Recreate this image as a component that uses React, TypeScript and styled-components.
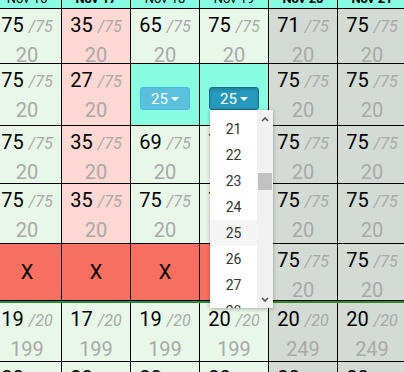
import React from 'react';
import styled, { createGlobalStyle, css } from 'styled-components';

const GlobalStyle = createGlobalStyle`
  html, body {
    margin: 0;
    padding: 0;
    background: #ffffff;
    font-family: 'Roboto', 'Liberation Sans', sans-serif;
    overflow: hidden;
  }
`;

type Tone = 'green' | 'pink' | 'gray' | 'cyan' | 'red';

type Cell =
  | { kind: 'count'; value: number; cap: number; sub: number; tone: Tone }
  | { kind: 'closed' }
  | { kind: 'pick'; value: number; open?: boolean };

const tones: Record<Tone, string> = {
  green: '#e9f7e9',
  pink: '#ffd7d3',
  gray: '#d3dbd4',
  cyan: '#88fde1',
  red: '#f76f61',
};

const days = [
  { label: 'Nov 16', bold: false },
  { label: 'Nov 17', bold: true },
  { label: 'Nov 18', bold: false },
  { label: 'Nov 19', bold: false },
  { label: 'Nov 20', bold: true },
  { label: 'Nov 21', bold: true },
];

const c = (value: number, cap: number, sub: number, tone: Tone): Cell => ({
  kind: 'count',
  value,
  cap,
  sub,
  tone,
});

const rows: { height: number; rule?: boolean; cells: Cell[] }[] = [
  {
    height: 54,
    cells: [c(75, 75, 20, 'green'), c(35, 75, 20, 'pink'), c(65, 75, 20, 'green'), c(75, 75, 20, 'green'), c(71, 75, 20, 'gray'), c(75, 75, 20, 'gray')],
  },
  {
    height: 61,
    cells: [c(75, 75, 20, 'green'), c(27, 75, 20, 'pink'), { kind: 'pick', value: 25 }, { kind: 'pick', value: 25, open: true }, c(75, 75, 20, 'gray'), c(75, 75, 20, 'gray')],
  },
  {
    height: 57,
    cells: [c(75, 75, 20, 'green'), c(35, 75, 20, 'pink'), c(69, 75, 20, 'green'), c(75, 75, 20, 'green'), c(75, 75, 20, 'gray'), c(75, 75, 20, 'gray')],
  },
  {
    height: 59,
    cells: [c(75, 75, 20, 'green'), c(35, 75, 20, 'pink'), c(75, 75, 20, 'green'), c(75, 75, 20, 'green'), c(75, 75, 20, 'gray'), c(75, 75, 20, 'gray')],
  },
  {
    height: 56,
    cells: [{ kind: 'closed' }, { kind: 'closed' }, { kind: 'closed' }, { kind: 'closed' }, c(75, 75, 20, 'gray'), c(75, 75, 20, 'gray')],
  },
  {
    height: 58,
    rule: true,
    cells: [c(19, 20, 199, 'green'), c(17, 20, 199, 'green'), c(19, 20, 199, 'green'), c(20, 20, 199, 'green'), c(20, 20, 249, 'gray'), c(20, 20, 249, 'gray')],
  },
  {
    height: 58,
    cells: [c(20, 20, 199, 'green'), c(20, 20, 199, 'green'), c(20, 20, 199, 'green'), c(20, 20, 199, 'green'), c(20, 20, 249, 'gray'), c(20, 20, 249, 'gray')],
  },
];

const options = [21, 22, 23, 24, 25, 26, 27, 28];

export default function App() {
  return (
    <>
      <GlobalStyle />
      <Viewport>
        <Table>
          <Row $height={8}>
            {days.map((d) => (
              <HeadCell key={d.label}>
                <HeadLabel $bold={d.bold}>{d.label}</HeadLabel>
              </HeadCell>
            ))}
          </Row>
          {rows.map((row, ri) => (
            <Row key={ri} $height={row.height} $rule={row.rule}>
              {row.cells.map((cell, ci) => renderCell(cell, ci))}
            </Row>
          ))}
        </Table>
      </Viewport>
    </>
  );
}

function renderCell(cell: Cell, key: number) {
  if (cell.kind === 'closed') {
    return (
      <DayCell key={key} $tone="red" $center>
        <Closed>X</Closed>
      </DayCell>
    );
  }
  if (cell.kind === 'pick') {
    return (
      <DayCell key={key} $tone="cyan">
        <Dropdown>
          <PickButton $active={cell.open}>
            {cell.value}
            <Caret />
          </PickButton>
          {cell.open && (
            <Menu>
              <MenuList>
                {options.map((o) => (
                  <MenuItem key={o} $selected={o === cell.value}>
                    {o}
                  </MenuItem>
                ))}
              </MenuList>
              <ScrollTrack>
                <Arrow viewBox="0 0 8 5">
                  <polyline points="1,4 4,1 7,4" />
                </Arrow>
                <Thumb />
                <Arrow viewBox="0 0 8 5" $bottom>
                  <polyline points="1,1 4,4 7,1" />
                </Arrow>
              </ScrollTrack>
            </Menu>
          )}
        </Dropdown>
      </DayCell>
    );
  }
  return (
    <DayCell key={key} $tone={cell.tone}>
      <Line>
        <Big>{cell.value}</Big>
        <Cap>/{cell.cap}</Cap>
      </Line>
      <Sub>{cell.sub}</Sub>
    </DayCell>
  );
}

const Viewport = styled.div`
  width: 404px;
  height: 372px;
  overflow: hidden;
`;

const Table = styled.div`
  display: grid;
  row-gap: 1px;
  width: 413px;
  margin-left: -7px;
  background: #000;
`;

const Row = styled.div<{ $height: number; $rule?: boolean }>`
  display: grid;
  grid-template-columns: repeat(6, 68px);
  grid-template-rows: minmax(0, 1fr);
  column-gap: 1px;
  height: ${(p) => p.$height}px;
  ${(p) =>
    p.$rule &&
    css`
      border-top: 2px solid #2b8a2b;
    `}
`;

const HeadCell = styled.div`
  background: #88fde1;
  display: flex;
  align-items: flex-end;
  justify-content: center;
  overflow: hidden;
  min-height: 0;
`;

const HeadLabel = styled.span<{ $bold: boolean }>`
  font-size: 13px;
  line-height: 14px;
  padding-bottom: 2px;
  color: #000;
  font-weight: ${(p) => (p.$bold ? 700 : 400)};
`;

const DayCell = styled.div<{ $tone: Tone; $center?: boolean }>`
  background: ${(p) => tones[p.$tone]};
  min-height: 0;
  box-sizing: border-box;
  padding-top: ${(p) => (p.$center ? 0 : 2)}px;
  display: flex;
  flex-direction: column;
  align-items: center;
  justify-content: ${(p) => (p.$center ? 'center' : 'flex-start')};
`;

const Line = styled.div`
  display: flex;
  align-items: baseline;
  gap: 5px;
  line-height: 28px;
`;

const Big = styled.span`
  font-size: 20px;
  color: #000;
`;

const Cap = styled.span`
  font-size: 16px;
  font-style: italic;
  color: #a9a9a9;
`;

const Sub = styled.div`
  font-size: 20px;
  line-height: 28px;
  color: #a9a9a9;
`;

const Closed = styled.span`
  font-size: 20px;
  color: #000;
`;

const Dropdown = styled.div`
  position: relative;
  margin-top: 21px;
`;

const PickButton = styled.div<{ $active?: boolean }>`
  width: 50px;
  height: 23px;
  box-sizing: border-box;
  border-radius: 3px;
  display: flex;
  align-items: center;
  justify-content: center;
  gap: 3px;
  color: #fff;
  font-size: 15px;
  background: ${(p) => (p.$active ? '#269abc' : '#5bc0de')};
  border: 1px solid ${(p) => (p.$active ? '#1b6d85' : '#46b8da')};
  box-shadow: ${(p) => (p.$active ? 'inset 0 2px 3px rgba(0,0,0,0.15)' : 'none')};
`;

const Caret = styled.span`
  width: 0;
  height: 0;
  border-left: 4px solid transparent;
  border-right: 4px solid transparent;
  border-top: 4px solid #fff;
`;

const Menu = styled.div`
  position: absolute;
  top: 100%;
  left: 1px;
  z-index: 10;
  width: 63px;
  height: 198px;
  background: #fff;
  box-shadow: 0 1px 4px rgba(0, 0, 0, 0.3);
  display: flex;
  overflow: hidden;
`;

const MenuList = styled.div`
  width: 47px;
  padding-top: 6px;
`;

const MenuItem = styled.div<{ $selected?: boolean }>`
  height: 26px;
  line-height: 26px;
  text-align: center;
  font-size: 14px;
  color: #333;
  background: ${(p) => (p.$selected ? '#f5f5f5' : 'transparent')};
`;

const ScrollTrack = styled.div`
  position: relative;
  width: 16px;
  background: #f1f1f1;
`;

const Thumb = styled.div`
  position: absolute;
  top: 63px;
  left: 1px;
  width: 14px;
  height: 17px;
  background: #c1c1c1;
`;

const Arrow = styled.svg<{ $bottom?: boolean }>`
  position: absolute;
  left: 4px;
  width: 8px;
  height: 5px;
  fill: none;
  stroke: #505050;
  stroke-width: 1.6;
  ${(p) => (p.$bottom ? 'bottom: 6px;' : 'top: 7px;')}
`;
